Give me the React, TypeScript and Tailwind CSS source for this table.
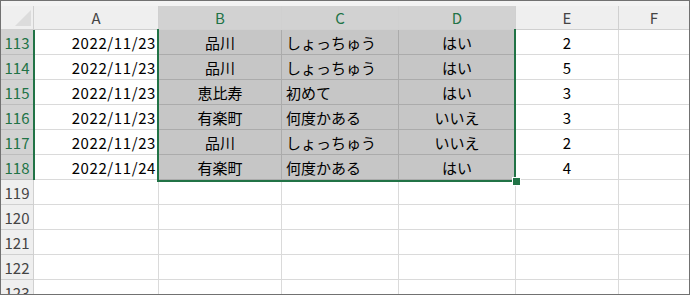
import React from 'react';

type Row = { n: number; a?: string; b?: string; c?: string; d?: string; e?: string };

const rows: Row[] = [
  { n: 113, a: '2022/11/23', b: '品川', c: 'しょっちゅう', d: 'はい', e: '2' },
  { n: 114, a: '2022/11/23', b: '品川', c: 'しょっちゅう', d: 'はい', e: '5' },
  { n: 115, a: '2022/11/23', b: '恵比寿', c: '初めて', d: 'はい', e: '3' },
  { n: 116, a: '2022/11/23', b: '有楽町', c: '何度かある', d: 'いいえ', e: '3' },
  { n: 117, a: '2022/11/23', b: '品川', c: 'しょっちゅう', d: 'いいえ', e: '2' },
  { n: 118, a: '2022/11/24', b: '有楽町', c: '何度かある', d: 'はい', e: '4' },
  { n: 119 },
  { n: 120 },
  { n: 121 },
  { n: 122 },
  { n: 123 },
];

const cols = 'grid grid-cols-[33px_125px_123px_117px_117px_103px_1fr]';
const font = { fontFamily: '"Noto Sans CJK JP", "Noto Sans", sans-serif' };

function ColHeader({ label, active }: { label: string; active?: boolean }) {
  return (
    <div
      className={`flex items-center justify-center border-r border-b border-[#d0d0d0] text-[15px] ${
        active ? 'bg-[#d2d2d2] text-[#217346]' : 'bg-[#efefef] text-[#444]'
      }`}
    >
      {label}
    </div>
  );
}

export default function App() {
  return (
    <div className="w-[690px] h-[295px] bg-white" style={font}>
      <div className="relative w-full h-full overflow-hidden border border-[#717171]">
        <div className="h-[5px] bg-[#f3f3f3]" />

        {/* column headers */}
        <div className={`${cols} h-[24px] leading-none`}>
          <div className="relative border-r border-b border-[#d0d0d0] bg-[#efefef]">
            <div className="absolute right-[2px] bottom-[3px] w-0 h-0 border-l-[16px] border-l-transparent border-b-[16px] border-b-[#dcdcdc]" />
          </div>
          <ColHeader label="A" />
          <ColHeader label="B" active />
          <ColHeader label="C" active />
          <ColHeader label="D" active />
          <ColHeader label="E" />
          <div className="flex items-center justify-center border-b border-[#d0d0d0] bg-[#efefef] text-[15px] text-[#444]">F</div>
        </div>

        {/* sheet body */}
        {rows.map(r => {
          const sel = !!r.a;
          const selCell = 'bg-[#c6c6c6] border-r border-b border-[#ababab]';
          const plain = 'border-r border-b border-[#dadada]';
          return (
            <div key={r.n} className={`${cols} h-[25px] text-[15px] leading-none text-black`}>
              <div
                className={`flex items-center justify-center border-r border-b ${
                  sel ? 'bg-[#d2d2d2] border-[#bdbdbd] text-[#217346]' : 'bg-[#efefef] border-[#d0d0d0] text-[#444]'
                }`}
              >
                {r.n}
              </div>
              <div className={`flex items-center justify-end pr-[2px] tracking-[0.6px] ${plain}`}>{r.a}</div>
              <div className={`flex items-center justify-center ${sel ? selCell : plain}`}>{r.b}</div>
              <div className={`flex items-center pl-[4px] ${sel ? selCell : plain}`}>{r.c}</div>
              <div className={`flex items-center justify-center ${sel ? selCell : plain}`}>{r.d}</div>
              <div className={`flex items-center justify-center ${plain}`}>{r.e}</div>
              <div className="border-b border-[#dadada]" />
            </div>
          );
        })}

        {/* active row edge in the row header */}
        <div className="absolute left-[32px] top-[29px] w-[2px] h-[150px] bg-[#217346]" />

        {/* selection frame B113:D118 with fill handle */}
        <div className="absolute left-[156px] top-[28px] w-[359px] h-[153px] border-2 border-t-0 border-[#217346] pointer-events-none" />
        <div className="absolute left-[511px] top-[176px] w-[7px] h-[7px] bg-[#217346] border border-white box-content" />
      </div>
    </div>
  );
}
